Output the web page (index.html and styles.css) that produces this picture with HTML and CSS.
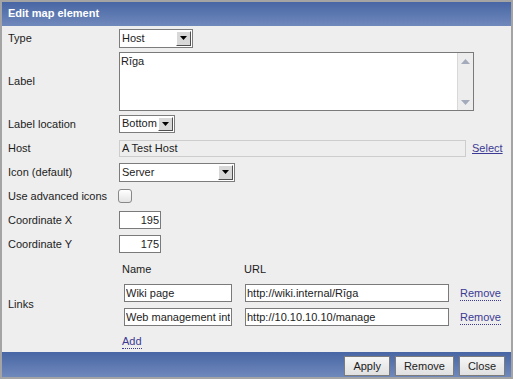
FILE: index.html
```html
<!DOCTYPE html>
<html>
<head>
<meta charset="utf-8">
<title>Edit map element</title>
<link rel="stylesheet" href="styles.css">
</head>
<body>
<div class="dialog">
<div class="title">Edit map element</div>

<div class="form">
  <div class="row">
    <div class="label">Type</div>
    <div class="field">
      <span class="select sel-type"><span class="sel-text">Host</span><span class="arrow"><svg width="7" height="4" viewBox="0 0 7 4"><path d="M0 0H7L3.5 4Z"/></svg></span></span>
    </div>
  </div>

  <div class="row row-tall">
    <div class="label">Label</div>
    <div class="field">
      <div class="textarea">
        <div class="ta-text">Rīga</div>
        <div class="ta-scroll">
          <svg width="9" height="5" viewBox="0 0 9 5"><path d="M0 5H9L4.5 0Z"/></svg>
          <svg width="9" height="5" viewBox="0 0 9 5"><path d="M0 0H9L4.5 5Z"/></svg>
        </div>
      </div>
    </div>
  </div>

  <div class="row">
    <div class="label">Label location</div>
    <div class="field">
      <span class="select sel-loc"><span class="sel-text">Bottom</span><span class="arrow"><svg width="7" height="4" viewBox="0 0 7 4"><path d="M0 0H7L3.5 4Z"/></svg></span></span>
    </div>
  </div>

  <div class="row">
    <div class="label">Host</div>
    <div class="field">
      <span class="readonly">A Test Host</span>
      <a class="link solid" href="#">Select</a>
    </div>
  </div>

  <div class="row">
    <div class="label">Icon (default)</div>
    <div class="field">
      <span class="select sel-icon"><span class="sel-text">Server</span><span class="arrow"><svg width="7" height="4" viewBox="0 0 7 4"><path d="M0 0H7L3.5 4Z"/></svg></span></span>
    </div>
  </div>

  <div class="row">
    <div class="label">Use advanced icons</div>
    <div class="field"><span class="checkbox"></span></div>
  </div>

  <div class="row">
    <div class="label">Coordinate X</div>
    <div class="field"><input class="input coord" type="text" value="195"></div>
  </div>

  <div class="row">
    <div class="label">Coordinate Y</div>
    <div class="field"><input class="input coord" type="text" value="175"></div>
  </div>

  <div class="row row-links">
    <div class="label">Links</div>
    <div class="links">
      <div class="lhead">Name</div>
      <div class="lhead">URL</div>
      <div></div>

      <div><input class="input lname" type="text" value="Wiki page"></div>
      <div><input class="input lurl" type="text" value="http://wiki.internal/Rīga"></div>
      <div><a class="link dotted" href="#">Remove</a></div>

      <div><input class="input lname" type="text" value="Web management interface"></div>
      <div><input class="input lurl" type="text" value="http://10.10.10.10/manage"></div>
      <div><a class="link dotted" href="#">Remove</a></div>

      <div><a class="link dotted" href="#">Add</a></div>
    </div>
  </div>
</div>

<div class="footer">
  <button class="button">Apply</button>
  <button class="button">Remove</button>
  <button class="button">Close</button>
</div>
</div>
</body>
</html>
```

FILE: styles.css
```css
/* Edit map element dialog */

body
{ margin: 0;
background-color: #eeeeee;
font-family: "Liberation Sans", Arial, sans-serif;
font-size: 11px;
color: #1c1c1c;
}

div.dialog
{ width: 513px;
height: 379px;
box-sizing: border-box;
border: 2px solid #a4a4a4;
background-color: #eeeeee;
display: flex;
flex-direction: column;
}

div.title
{ height: 24px;
line-height: 23px;
padding-left: 6px;
color: #ffffff;
font-weight: bold;
background: linear-gradient(#4866a4, #7089bc);
}

div.form
{ height: 326px;
padding: 0 8px 0 6px;
}

div.row
{ display: grid;
grid-template-columns: 111px 1fr;
align-items: center;
height: 24px;
}

div.row-tall { height: 62px; }
div.row-links { height: 96px; }

div.field
{ display: flex;
align-items: center;
}

/* drop down boxes */

span.select
{ display: flex;
height: 19px;
box-sizing: border-box;
border: 1px solid #7c7c7c;
background-color: #ffffff;
}

span.sel-type { width: 74px; }
span.sel-loc { width: 56px; height: 18px; }
span.sel-icon { width: 116px; }

span.sel-text
{ flex: 1;
overflow: hidden;
white-space: nowrap;
padding-left: 2px;
line-height: 16px;
}

span.sel-loc span.sel-text { line-height: 15px; }

span.arrow
{ width: 13px;
margin: 1px 1px 1px 0;
border-top: 1px solid #ffffff;
border-left: 1px solid #ffffff;
border-right: 1px solid #505050;
border-bottom: 1px solid #505050;
background-color: #d8d8d8;
display: flex;
align-items: center;
justify-content: center;
}

span.arrow svg { fill: #000000; }

/* text area */

div.textarea
{ width: 355px;
height: 59px;
box-sizing: border-box;
border: 1px solid #7a7a7a;
background-color: #ffffff;
display: flex;
}

div.ta-text
{ flex: 1;
padding: 2px 1px;
}

div.ta-scroll
{ width: 15px;
background-color: #ededed;
border-left: 1px solid #d8d8d8;
display: flex;
flex-direction: column;
justify-content: space-between;
align-items: center;
padding: 6px 0 5px;
}

div.ta-scroll svg { fill: #a2aabb; }

/* other fields */

span.readonly
{ width: 347px;
height: 17px;
box-sizing: border-box;
border: 1px solid #cdcdcd;
padding-left: 2px;
line-height: 15px;
}

input.input
{ height: 18px;
box-sizing: border-box;
border: 1px solid #7a7a7a;
background-color: #ffffff;
margin: 0;
padding: 0 1px;
font-family: "Liberation Sans", Arial, sans-serif;
font-size: 11px;
color: #1c1c1c;
outline: none;
}

input.coord
{ width: 42px;
text-align: right;
}

span.checkbox
{ width: 14px;
height: 14px;
box-sizing: border-box;
margin-left: -1px;
border: 1px solid #888888;
border-radius: 3px;
background: linear-gradient(#ffffff, #e4e4e4);
}

a.link
{ color: #3c3a94;
text-decoration: none;
}

a.solid
{ margin-left: 6px;
text-decoration: underline;
}

a.dotted
{ border-bottom: 1px dotted #3c3a94;
padding-bottom: 1px;
}

/* links table */

div.links
{ align-self: stretch;
display: grid;
grid-template-columns: 122px 216px auto;
grid-template-rows: 25px 24px 24px 23px;
align-items: center;
padding-left: 3px;
}

input.lname { width: 108px; margin-left: 2px; }
input.lurl { width: 204px; margin-left: 1px; }

/* buttons */

div.footer
{ height: 25px;
box-sizing: border-box;
padding-right: 6px;
display: flex;
justify-content: flex-end;
align-items: center;
gap: 5px;
background: linear-gradient(#4866a4, #7089bc);
}

button.button
{ height: 20px;
margin-top: 3px;
padding: 0 8px;
border: 1px solid #7c7c7c;
border-radius: 0;
background: linear-gradient(#f6f6f6, #e0e0e0);
font-family: "Liberation Sans", Arial, sans-serif;
font-size: 11px;
color: #1c1c1c;
}
```
